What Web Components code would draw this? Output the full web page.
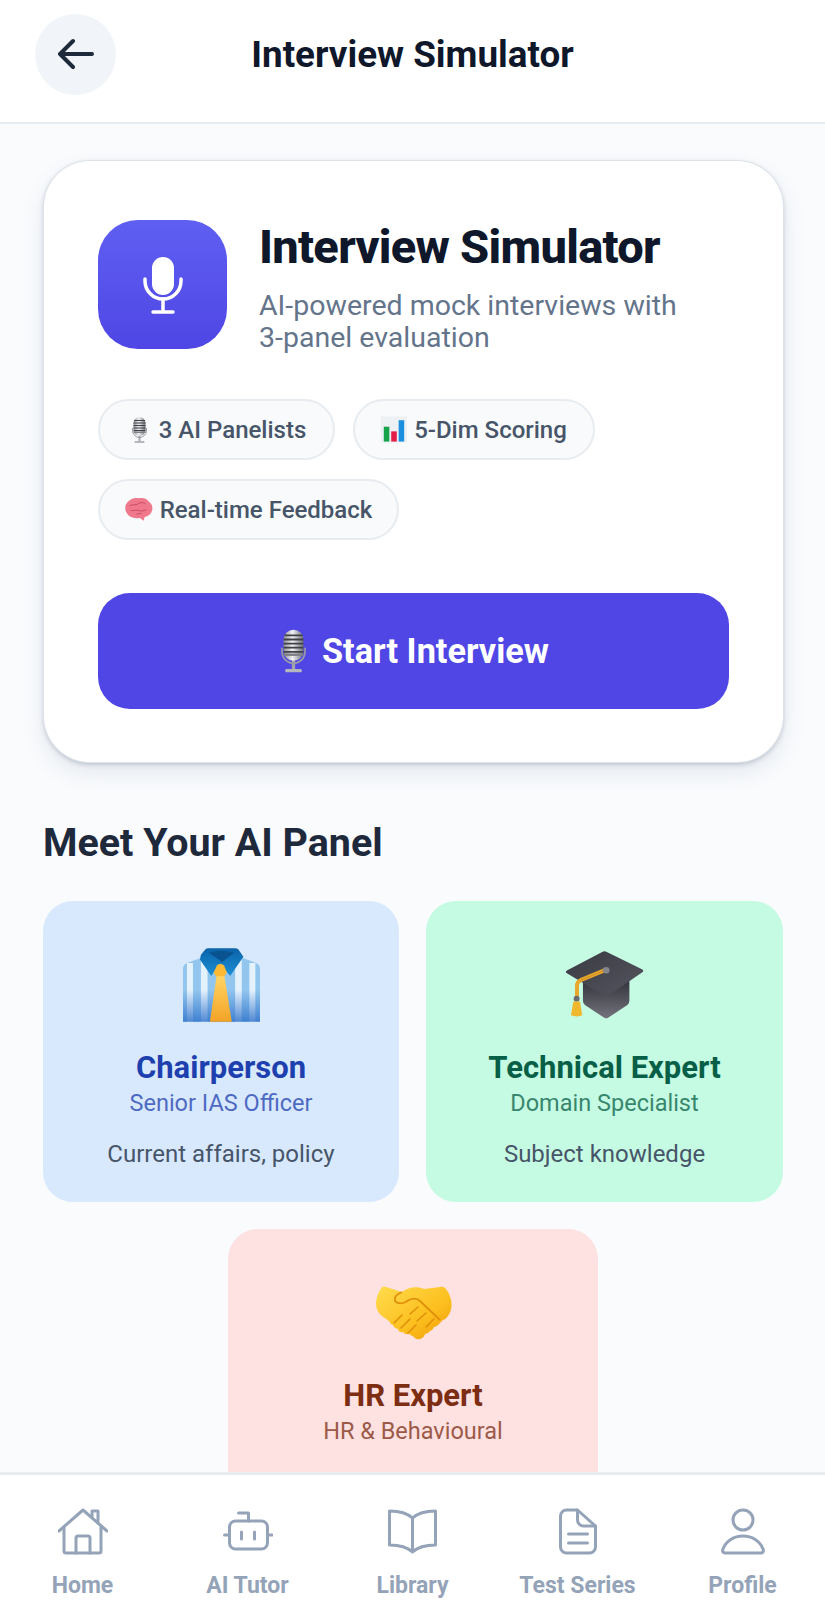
<!DOCTYPE html>
<html lang="en">
<head>
<meta charset="utf-8">
<title>Interview Simulator</title>
<style>
  html, body { margin: 0; padding: 0; background: #f9fbfd; }
  body { font-family: Roboto, "Liberation Sans", sans-serif; }
</style>
</head>
<body>
<interview-app></interview-app>

<script>
const NAV_ICONS = {
  home: `<path d="M1 25 25 4l24 21"/><path d="M6 21v24a2 2 0 0 0 2 2h33a2 2 0 0 0 2-2V21"/><path d="M18 47V32a2 2 0 0 1 2-2h10a2 2 0 0 1 2 2v15"/><path d="M34 11V5h6v12"/>`,
  robot: `<rect x="6.500" y="15" width="38" height="28" rx="6"/><path d="M25.500 15V7h-10"/><path d="M1.500 29h5M44.500 29H49"/><path d="M18.500 26v7M31.500 26v7"/>`,
  book: `<path d="M24.500 12C18 6 10 5 1.500 5v34C10 39 18 40 24.500 46 31 40 39 39 47.500 39V5C39 5 31 6 24.500 12v34"/>`,
  doc: `<path d="M24.500 4h-11a6 6 0 0 0-6 6v31a6 6 0 0 0 6 6h23a6 6 0 0 0 6-6V20Z"/><path d="M24.500 4v10a6 6 0 0 0 6 6h12"/><path d="M15.500 28h19M15.500 37h19"/>`,
  profile: `<circle cx="25" cy="14" r="10"/><path d="M7 47h36c2 0 3-2 2-4-3-8-11-13-20-13S8 35 5 43c-1 2 0 4 2 4Z"/>`
}

// emoji are drawn, the sandbox has no colour emoji font
const EMOJI = {
  mic: `<svg viewBox="0 0 34 56" width="100%" height="100%">
    <defs><linearGradient id="m" x1="0" x2="1" y1="0" y2="0"><stop offset="0" stop-color="#8d8f96"/><stop offset=".45" stop-color="#f1f2f4"/><stop offset="1" stop-color="#6f7178"/></linearGradient></defs>
    <rect x="15" y="38" width="4" height="13" fill="#a4a6ac"/>
    <rect x="7" y="50" width="20" height="4" rx="1.500" fill="#b5b7bc"/>
    <path d="M3 24v5a14 14 0 0 0 28 0v-5" fill="none" stroke="#9a9ca3" stroke-width="2"/>
    <rect x="5" y="2" width="24" height="38" rx="12" fill="url(#m)"/>
    <path d="M6 9h22M5 14h24M5 19h24M5 24h24M5 29h24" stroke="#3f4148" stroke-width="2.200"/>
    <rect x="5" y="31" width="24" height="3" fill="#7e8087"/>
  </svg>`,
  chart: `<svg viewBox="0 0 28 28" width="100%" height="100%">
    <rect x="0" y="0" width="28" height="28" fill="#eef1f3"/>
    <rect x="3" y="11" width="6" height="16" fill="#16a34a"/>
    <rect x="11" y="16" width="6" height="11" fill="#e11d48"/>
    <rect x="19" y="4" width="6" height="23" fill="#1d8fe0"/>
  </svg>`,
  brain: `<svg viewBox="0 0 30 26" width="100%" height="100%">
    <path d="M15 1C20 0 24 2 26 5c3 2 4 6 3 9-1 4-4 6-8 7l-1 4-4-3C9 23 4 21 2 17-1 13 0 7 4 4c3-3 7-4 11-3Z" fill="#f0788c"/>
    <path d="M5 9c3-2 6 0 9-2s5-2 8 0M6 14c3 1 5-1 8 0s5 1 9-1M12 18c2-1 4 0 6-1" fill="none" stroke="#c94a63" stroke-width="1"/>
  </svg>`,
  shirt: `<svg viewBox="38 40 232 222" width="100%" height="100%">
    <defs>
      <linearGradient id="d" x1="0" x2="0" y1="0" y2="1"><stop offset=".5" stop-color="#2a6fc9" stop-opacity="0"/><stop offset="1" stop-color="#2a6fc9" stop-opacity=".8"/></linearGradient>
      <linearGradient id="t" x1="0" x2="0" y1="0" y2="1"><stop offset="0" stop-color="#ffd463"/><stop offset="1" stop-color="#f3a326"/></linearGradient>
      <linearGradient id="c" x1="0" x2="0" y1="0" y2="1"><stop offset="0" stop-color="#0b63a8"/><stop offset="1" stop-color="#1b8fd6"/></linearGradient>
    </defs>
    <path d="M50 85 95 68h120l43 17q12 5 12 17v160H38V102q0-12 12-17Z" fill="#92c6ef"/>
    <path d="M50 85h18v177H50ZM92 72h20v190H92ZM195 72h20v190h-20ZM238 85h18v177h-18Z" fill="#e4f2fd"/>
    <path d="M50 85 95 68h120l43 17q12 5 12 17v160H38V102q0-12 12-17Z" fill="url(#d)"/>
    <path d="M92 60 105 44q4-4 10-4h80q6 0 10 4l15 22-40 58-30-38-27 38-34-50Z" fill="url(#c)"/>
    <path d="M116 54q40-12 76 0l-36 28Z" fill="#0a5391"/>
    <path d="M140 92q10-8 22 0l8 22-10 14h-20l-10-14Z" fill="#fbb934"/>
    <path d="M139 125h24l22 137h-66Z" fill="url(#t)"/>
  </svg>`,
  cap: `<svg viewBox="42 32 236 205" width="100%" height="100%">
    <defs>
      <linearGradient id="k" x1="0" x2="0" y1="0" y2="1"><stop offset="0" stop-color="#33333b"/><stop offset="1" stop-color="#73737d"/></linearGradient>
      <linearGradient id="g" x1="0" x2="1" y1="0" y2="1"><stop offset="0" stop-color="#3a3a43"/><stop offset="1" stop-color="#55555f"/></linearGradient>
    </defs>
    <path d="M95 120v62q0 8 6 13l58 38q6 4 12 0l58-38q6-5 6-13v-62Z" fill="url(#k)"/>
    <path d="M153 35q7-4 14 0l106 52q8 5 0 10L172 166q-7 4-14 0L48 100q-9-5 0-10Z" fill="url(#g)"/>
    <path d="M165 88 88 120q-11 5-11 16v40" fill="none" stroke="#e9a72b" stroke-width="12"/>
    <path d="M165 88 88 120" fill="none" stroke="#b9801c" stroke-width="2"/>
    <circle cx="165" cy="90" r="10" fill="#85858d"/>
    <circle cx="76" cy="176" r="9" fill="#6b6b73"/>
    <path d="M66 184h20l7 42q-16 7-34 0Z" fill="#f0b62c"/>
  </svg>`,
  shake: `<svg viewBox="0 0 78 54" width="100%" height="100%">
    <defs>
      <linearGradient id="h" x1="0" x2="1" y1="0" y2="1"><stop offset="0" stop-color="#ffdc4e"/><stop offset=".6" stop-color="#fcbf1e"/><stop offset="1" stop-color="#f09a08"/></linearGradient>
    </defs>
    <path d="M8 1q2-1 4 0l16 5c6-5 15-6 22-3l16-2q4-1 6 2c7 9 7 20 2 27q-2 3-5 4l-4 4q-2 3-5 3-1 3-4 4-2 3-5 3-1 4-5 5t-6-2l-5-3q-4 1-6-2-4 1-5-3-4-1-5-4-3-1-4-4l-7-5C0 24 0 12 8 1Z" fill="url(#h)"/>
    <path d="M28 6c-5 2-8 5-7 9 4 4 10 2 14-1 4-2 8-2 11 1l20 19" fill="none" stroke="#e0900a" stroke-width="1.800"/>
    <path d="M20 37l8-8M27 42l9-9M34 47l8-8M44 21l-8 7M52 27l-9 8M60 33l-8 8" fill="none" stroke="#e0900a" stroke-width="1.600" stroke-linecap="round"/>
  </svg>`
}

class EmojiIcon extends HTMLElement {
  connectedCallback() {
    const w = this.getAttribute('w')
    const h = this.getAttribute('h')
    this.attachShadow({ mode: 'open' }).innerHTML = `
      <style>
        :host { display: inline-block; flex: none; width: ${w}px; height: ${h}px; }
        svg { display: block; }
      </style>
      ${EMOJI[this.getAttribute('name')]}
    `
  }
}

class AppHeader extends HTMLElement {
  connectedCallback() {
    this.attachShadow({ mode: 'open' }).innerHTML = `
      <style>
        :host {
          display: grid;
          grid-template-columns: 81px 1fr 81px;
          align-items: center;
          height: 122px;
          padding: 0 35px;
          background: #fff;
          border-bottom: 2px solid #e6ebf0;
        }
        .back {
          display: flex;
          align-items: center;
          justify-content: center;
          width: 81px;
          height: 81px;
          margin-top: -14px;
          border-radius: 50%;
          background: #f1f5f9;
        }
        h1 {
          margin: -13px 0 0;
          text-align: center;
          font-size: 36.800px;
          font-weight: 700;
          color: #0f172a;
        }
      </style>
      <div class="back">
        <svg width="36" height="32" viewBox="0 0 36 32" fill="none" stroke="#1e293b" stroke-width="4" stroke-linecap="round" stroke-linejoin="round">
          <path d="M34 16H2M15 3 2 16l13 13"/>
        </svg>
      </div>
      <h1><slot></slot></h1>
    `
  }
}

class FeatureChip extends HTMLElement {
  connectedCallback() {
    this.attachShadow({ mode: 'open' }).innerHTML = `
      <style>
        :host {
          display: inline-flex;
          align-items: center;
          justify-content: center;
          gap: 7px;
          box-sizing: border-box;
          height: 61px;
          border: 2px solid #e7ecf1;
          border-radius: 31px;
          background: #f8fafc;
          font-size: 24px;
          font-weight: 500;
          color: #475569;
          white-space: nowrap;
        }
      </style>
      <slot name="icon"></slot><slot></slot>
    `
  }
}

class IntroCard extends HTMLElement {
  connectedCallback() {
    this.attachShadow({ mode: 'open' }).innerHTML = `
      <style>
        :host {
          display: block;
          box-sizing: border-box;
          margin-left: 1px;
          padding: 59px 54px 53px;
          background: #fff;
          border-radius: 46px;
          box-shadow: 0 0 0 1px #dde3e9, 0 2px 5px rgba(100, 116, 139, .4), 0 10px 22px rgba(100, 116, 139, .14);
        }
        .hero { display: flex; gap: 32px; height: 129px; }
        .logo {
          display: flex;
          align-items: center;
          justify-content: center;
          flex: none;
          width: 129px;
          height: 129px;
          border-radius: 40px;
          background: linear-gradient(180deg, #5f5ff2, #4f46e5);
        }
        .copy { padding-top: 1px; }
        h2 {
          margin: 0;
          font-size: 47px;
          line-height: 52px;
          font-weight: 800;
          letter-spacing: -.7px;
          color: #0f172a;
        }
        p {
          max-width: 430px;
          margin: 17px 0 0;
          font-size: 28.500px;
          line-height: 32px;
          color: #64748b;
        }
        .chips {
          display: flex;
          flex-wrap: wrap;
          gap: 19px 18px;
          margin-top: 50px;
        }
        .start {
          display: flex;
          align-items: center;
          justify-content: center;
          gap: 13px;
          height: 116px;
          margin-top: 53px;
          border-radius: 32px;
          background: #4f46e5;
          color: #fff;
          font-size: 34.300px;
          font-weight: 700;
        }
      </style>
      <div class="hero">
        <div class="logo">
          <svg width="48" height="64" viewBox="0 0 48 64" fill="none" stroke="#fff" stroke-width="3.500" stroke-linecap="round">
            <rect x="13" y="4" width="22" height="38" rx="11" fill="#fff" stroke="none"/>
            <path d="M6 26v2a18 18 0 0 0 36 0v-2"/>
            <path d="M24 46v12M14 59h20"/>
          </svg>
        </div>
        <div class="copy">
          <h2>Interview Simulator</h2>
          <p>AI-powered mock interviews with 3-panel evaluation</p>
        </div>
      </div>
      <div class="chips">
        <feature-chip style="width:237px"><emoji-icon slot="icon" name="mic" w="25" h="28"></emoji-icon>3 AI Panelists</feature-chip>
        <feature-chip style="width:242px"><emoji-icon slot="icon" name="chart" w="26" h="27"></emoji-icon>5-Dim Scoring</feature-chip>
        <feature-chip style="width:301px"><emoji-icon slot="icon" name="brain" w="28" h="25"></emoji-icon>Real-time Feedback</feature-chip>
      </div>
      <div class="start"><emoji-icon name="mic" w="31" h="46"></emoji-icon>Start Interview</div>
    `
  }
}

class PanelCard extends HTMLElement {
  connectedCallback() {
    this.attachShadow({ mode: 'open' }).innerHTML = `
      <style>
        :host {
          display: flex;
          flex-direction: column;
          align-items: center;
          box-sizing: border-box;
          height: 301px;
          padding-top: 44px;
          border-radius: 30px;
          background: var(--bg);
          text-align: center;
        }
        .pic { display: flex; align-items: center; justify-content: center; height: 80px; }
        .name { margin-top: 25px; font-size: 31px; line-height: 36px; font-weight: 700; color: var(--ink); }
        .role { margin-top: 1px; font-size: 23.500px; line-height: 32px; color: var(--ink); opacity: .75; }
        .focus { margin-top: 19px; font-size: 24px; line-height: 32px; color: #475569; }
      </style>
      <div class="pic"><slot name="pic"></slot></div>
      <div class="name">${this.getAttribute('name')}</div>
      <div class="role">${this.getAttribute('role-title')}</div>
      <div class="focus"><slot></slot></div>
    `
  }
}

class NavItem extends HTMLElement {
  connectedCallback() {
    this.attachShadow({ mode: 'open' }).innerHTML = `
      <style>
        :host {
          display: flex;
          flex-direction: column;
          align-items: center;
          gap: 17px;
          color: #94a3b8;
          font-size: 23px;
          line-height: 26px;
          font-weight: 700;
          white-space: nowrap;
        }
        svg { display: block; }
      </style>
      <svg width="50" height="50" viewBox="0 0 50 50" fill="none" stroke="#94a3b8" stroke-width="3" stroke-linecap="round" stroke-linejoin="round">
        ${NAV_ICONS[this.getAttribute('icon')]}
      </svg>
      <slot></slot>
    `
  }
}

class BottomNav extends HTMLElement {
  connectedCallback() {
    this.attachShadow({ mode: 'open' }).innerHTML = `
      <style>
        :host {
          position: absolute;
          left: 0;
          right: 0;
          bottom: 0;
          display: grid;
          grid-template-columns: repeat(5, 1fr);
          box-sizing: border-box;
          height: 128px;
          padding-top: 31px;
          background: rgba(255, 255, 255, .98);
          border-top: 3px solid #e8ecf0;
        }
      </style>
      <slot></slot>
    `
  }
}

class InterviewApp extends HTMLElement {
  connectedCallback() {
    this.attachShadow({ mode: 'open' }).innerHTML = `
      <style>
        :host {
          display: block;
          position: relative;
          height: 1600px;
          overflow: hidden;
          background: #f9fbfd;
        }
        main { padding: 37px 42px 0 43px; }
        h3 {
          margin: 59px 0 36px;
          font-size: 39.400px;
          line-height: 44px;
          font-weight: 700;
          color: #1e293b;
        }
        .panels {
          display: flex;
          flex-wrap: wrap;
          justify-content: center;
          gap: 27px;
        }
      </style>
      <app-header>Interview Simulator</app-header>
      <main>
        <intro-card></intro-card>
        <h3>Meet Your AI Panel</h3>
        <div class="panels">
          <panel-card name="Chairperson" role-title="Senior IAS Officer" style="width:356px;--bg:#d8e9fe;--ink:#1e40af">
            <emoji-icon slot="pic" name="shirt" w="77" h="74"></emoji-icon>Current affairs, policy
          </panel-card>
          <panel-card name="Technical Expert" role-title="Domain Specialist" style="width:357px;--bg:#c6fbe3;--ink:#065f46">
            <emoji-icon slot="pic" name="cap" w="79" h="68"></emoji-icon>Subject knowledge
          </panel-card>
          <panel-card name="HR Expert" role-title="HR &amp; Behavioural" style="width:370px;--bg:#fee2e2;--ink:#7c2d12">
            <emoji-icon slot="pic" name="shake" w="78" h="54"></emoji-icon>
          </panel-card>
        </div>
      </main>
      <bottom-nav>
        <nav-item icon="home">Home</nav-item>
        <nav-item icon="robot">AI Tutor</nav-item>
        <nav-item icon="book">Library</nav-item>
        <nav-item icon="doc">Test Series</nav-item>
        <nav-item icon="profile">Profile</nav-item>
      </bottom-nav>
    `
  }
}

customElements.define('emoji-icon', EmojiIcon)
customElements.define('app-header', AppHeader)
customElements.define('feature-chip', FeatureChip)
customElements.define('intro-card', IntroCard)
customElements.define('panel-card', PanelCard)
customElements.define('nav-item', NavItem)
customElements.define('bottom-nav', BottomNav)
customElements.define('interview-app', InterviewApp)
</script>
</body>
</html>
